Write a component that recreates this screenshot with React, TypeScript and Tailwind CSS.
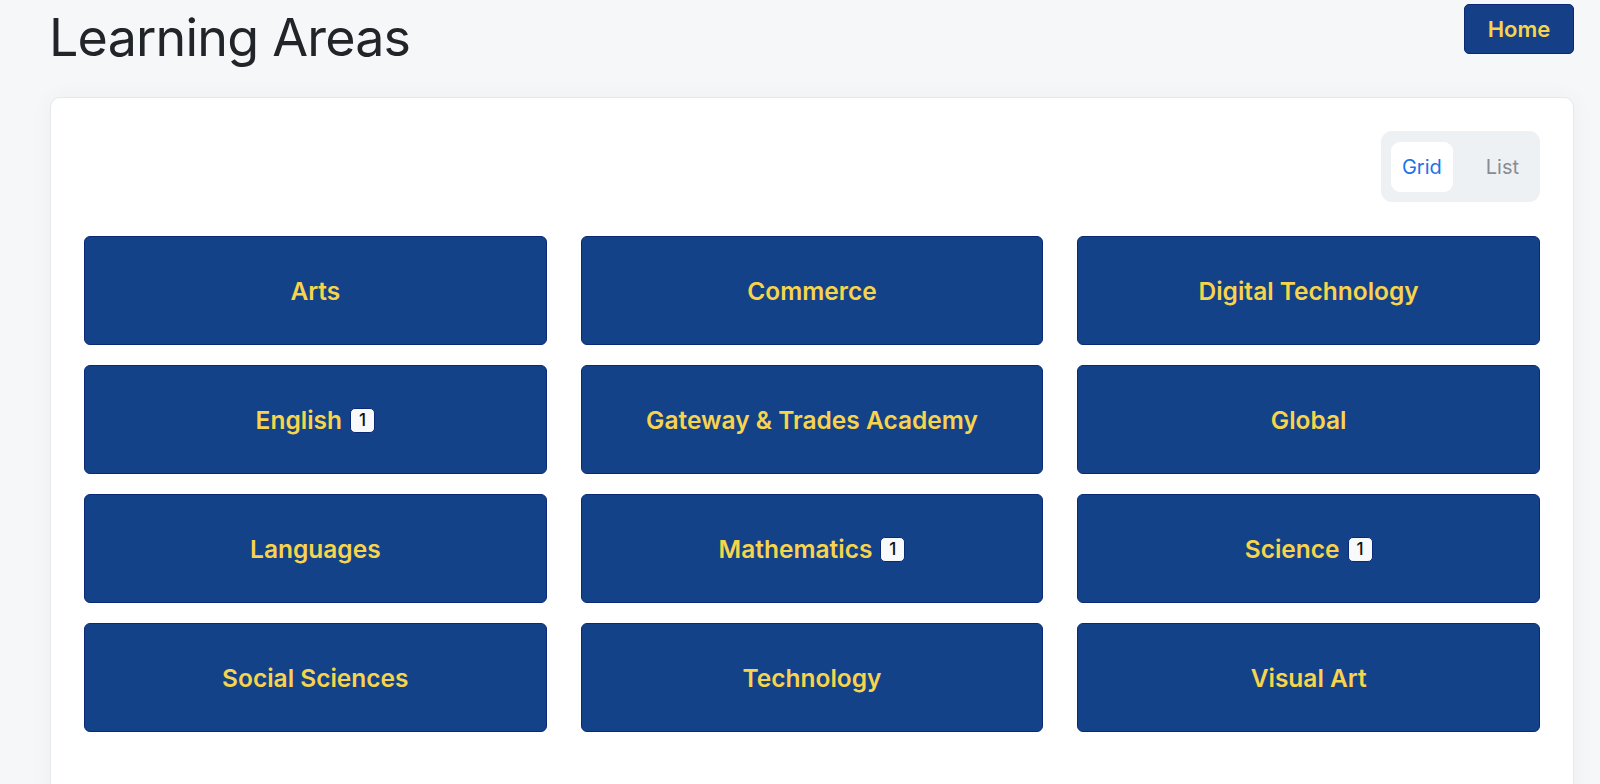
import React, { useState } from "react";

const areas: { name: string; count?: number }[] = [
  { name: "Arts" },
  { name: "Commerce" },
  { name: "Digital Technology" },
  { name: "English", count: 1 },
  { name: "Gateway & Trades Academy" },
  { name: "Global" },
  { name: "Languages" },
  { name: "Mathematics", count: 1 },
  { name: "Science", count: 1 },
  { name: "Social Sciences" },
  { name: "Technology" },
  { name: "Visual Art" },
];

const AreaTile = ({ name, count }: { name: string; count?: number }) => (
  <button className="flex h-[109px] items-center justify-center gap-2 rounded-[6px] border border-[#0a2a78] bg-[#144288] pt-[2px] text-[24.5px] font-semibold text-[#f7d44c]">
    <span>{name}</span>
    {count !== undefined && (
      <span className="flex h-[25px] w-[25px] items-center justify-center rounded-[5px] border border-[#0a2a78] bg-[#f8f9fb] text-[17px] font-medium text-[#111]">
        {count}
      </span>
    )}
  </button>
);

const ViewToggle = () => {
  const [view, setView] = useState<"grid" | "list">("grid");
  return (
    <div className="flex h-[71px] items-center rounded-[11px] bg-[#eef1f4] p-[10px]">
      <button
        onClick={() => setView("grid")}
        className={
          view === "grid"
            ? "h-[50px] rounded-[9px] bg-white px-[11px] text-[20px] text-[#1a73e8]"
            : "h-[50px] rounded-[9px] px-[11px] text-[20px] text-[#888c93]"
        }
      >
        Grid
      </button>
      <button
        onClick={() => setView("list")}
        className={
          view === "list"
            ? "ml-[22px] h-[50px] rounded-[9px] bg-white px-[11px] text-[20px] text-[#1a73e8]"
            : "ml-[22px] h-[50px] rounded-[9px] px-[11px] text-[20px] text-[#888c93]"
        }
      >
        List
      </button>
    </div>
  );
};

export default function App() {
  return (
    <div
      className="min-h-screen overflow-hidden bg-[#f6f7f9] pl-[49px] pr-[26px]"
      style={{ fontFamily: "Inter, 'Noto Sans', sans-serif" }}
    >
      <div className="flex items-start justify-between">
        <h1 className="mt-[6px] text-[52px] leading-[64px] font-normal tracking-[-0.8px] text-[#212529]">
          Learning Areas
        </h1>
        <button className="mt-[4px] h-[50px] w-[110px] rounded-[5px] border border-[#0a2a78] bg-[#153f86] text-[22px] font-semibold text-[#f7d44c]">
          Home
        </button>
      </div>
      <div className="mt-[27px] ml-px h-[720px] rounded-[10px] border border-[#e6e8eb] bg-white px-[33px] pt-[33px] shadow-[0_0_24px_rgba(0,0,0,0.04)]">
        <div className="flex justify-end">
          <ViewToggle />
        </div>
        <div className="mt-[34px] grid grid-cols-3 gap-x-[34px] gap-y-[20px]">
          {areas.map((a) => (
            <AreaTile key={a.name} name={a.name} count={a.count} />
          ))}
        </div>
      </div>
    </div>
  );
}
